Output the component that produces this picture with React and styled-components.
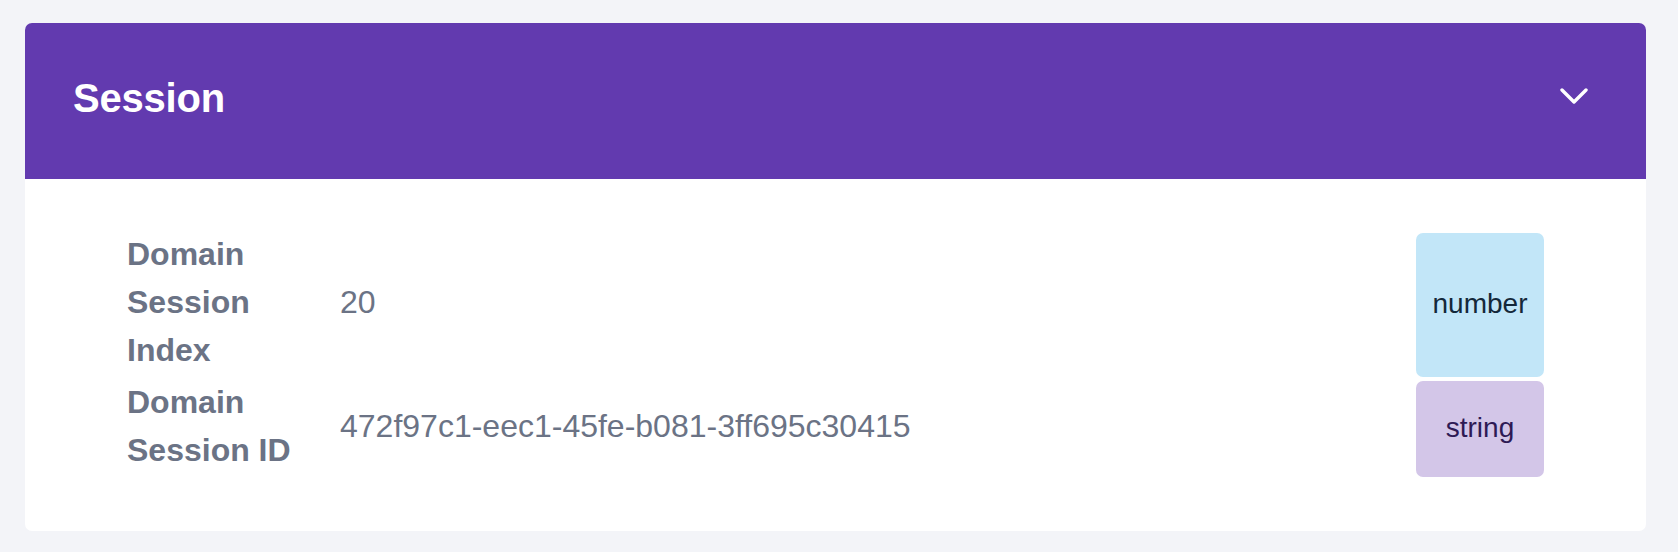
import React from 'react';
import styled, { createGlobalStyle } from 'styled-components';

const GlobalStyle = createGlobalStyle`
    html, body {
        margin: 0;
        padding: 0;
        background-color: #f3f4f8;
        font-family: "Liberation Sans", Arial, Helvetica, sans-serif;
    }
`;

const Page = styled.div`
    min-height: 552px;
    box-sizing: border-box;
    padding: 23px 32px 21px 25px;
`;

const Card = styled.section`
    background-color: #ffffff;
    border-radius: 7px;
    overflow: hidden;
`;

const Header = styled.header`
    height: 156px;
    box-sizing: border-box;
    display: flex;
    align-items: center;
    justify-content: space-between;
    padding: 0 58px 6px 48px;
    background-color: #623aaf;
`;

const Title = styled.h2`
    margin: 0;
    color: #ffffff;
    font-size: 40px;
    font-weight: 700;
    letter-spacing: -0.2px;
`;

const Toggle = styled.button`
    display: flex;
    padding: 0;
    margin: 0 0 4px 0;
    border: none;
    background: none;
    cursor: pointer;
`;

const Body = styled.div`
    display: grid;
    grid-template-columns: 213px 1fr 128px;
    row-gap: 4px;
    padding: 54px 102px 54px 102px;
`;

const Label = styled.div`
    width: 185px;
    margin: -3px 0 3px 0;
    color: #6b7385;
    font-size: 32px;
    font-weight: 700;
    line-height: 48px;
`;

const Value = styled.div`
    display: flex;
    align-items: center;
    margin: -3px 0 3px 0;
    color: #6b7385;
    font-size: 32px;
    line-height: 48px;
`;

const types = {
    number: { bg: '#c2e6f8', fg: '#14283a' },
    string: { bg: '#d3c6e8', fg: '#2e1a55' },
};

const Badge = styled.div`
    display: flex;
    align-items: center;
    justify-content: center;
    padding-bottom: 3px;
    border-radius: 7px;
    font-size: 28px;
    background-color: ${(props) => types[props.type].bg};
    color: ${(props) => types[props.type].fg};
`;

const rows = [
    { label: 'Domain Session Index', value: '20', type: 'number' },
    { label: 'Domain Session ID', value: '472f97c1-eec1-45fe-b081-3ff695c30415', type: 'string' },
];

function Chevron() {
    return (
        <svg width="28" height="16" viewBox="0 0 28 16" fill="none">
            <polyline
                points="2,2 14,14 26,2"
                stroke="#ffffff"
                strokeWidth="3.4"
                strokeLinecap="round"
                strokeLinejoin="round"
            />
        </svg>
    );
}

export default function App() {
    return (
        <Page>
            <GlobalStyle />
            <Card>
                <Header>
                    <Title>Session</Title>
                    <Toggle aria-label="Collapse">
                        <Chevron />
                    </Toggle>
                </Header>
                <Body>
                    {rows.map((row) => (
                        <React.Fragment key={row.label}>
                            <Label>{row.label}</Label>
                            <Value>{row.value}</Value>
                            <Badge type={row.type}>{row.type}</Badge>
                        </React.Fragment>
                    ))}
                </Body>
            </Card>
        </Page>
    );
}
